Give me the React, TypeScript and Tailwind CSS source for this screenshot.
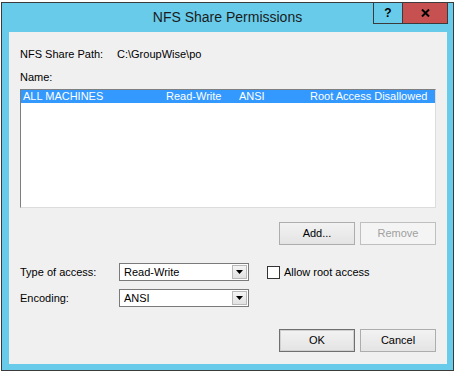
import React from "react";

const font = { fontFamily: '"Liberation Sans", Arial, sans-serif' };

function WinButton({ label, disabled, isDefault }: { label: string; disabled?: boolean; isDefault?: boolean }) {
  const base = "w-[76px] h-[23px] flex items-center justify-center text-[11px] leading-[13px]";
  if (disabled) {
    return <div className={`${base} border border-[#bfbfbf] bg-[#f4f4f4] text-[#a0a0a0]`}>{label}</div>;
  }
  return (
    <div
      className={`${base} border ${isDefault ? "border-[#6f6f6f] shadow-[inset_0_0_0_1px_#d0d0d0]" : "border-[#adadad]"} bg-gradient-to-b from-[#f2f2f2] to-[#e4e4e4] text-black`}
    >
      {label}
    </div>
  );
}

function Combo({ value }: { value: string }) {
  return (
    <div className="w-[130px] h-[18px] border border-[#7a7a7a] bg-white flex items-center">
      <span className="flex-1 pl-[4px] text-[11px] leading-[13px]">{value}</span>
      <div className="w-[15px] h-[14px] mr-[1px] border border-[#b9b9b9] bg-gradient-to-b from-[#f4f4f4] to-[#e2e2e2] flex items-center justify-center">
        <svg width="7" height="4" viewBox="0 0 7 4">
          <path d="M0 0h7L3.5 4z" fill="#000" />
        </svg>
      </div>
    </div>
  );
}

export default function App() {
  return (
    <div className="w-[456px] h-[372px] bg-white overflow-hidden pt-[2px] pl-[1px]" style={font}>
      <div className="w-[453px] h-[369px] border border-[#3b3b3b] bg-[#68cbea] flex flex-col">
        {/* title bar */}
        <div className="h-[29px] flex items-start shrink-0">
          <div className="w-[80px]" />
          <div className="flex-1 self-center text-center text-[14px] text-[#1b1b1b]">NFS Share Permissions</div>
          <div className="flex mr-[5px]">
            <div className="w-[29px] h-[21px] border-l border-b border-[#3b3b3b] flex items-center justify-center text-[12px] font-bold leading-none">?</div>
            <div className="w-[46px] h-[21px] border-l border-r border-b border-[#3b3b3b] bg-[#c75050] flex items-center justify-center">
              <svg width="9" height="8" viewBox="0 0 9 8">
                <path d="M1 0.5L8 7.5M8 0.5L1 7.5" stroke="#000" strokeWidth="2" />
              </svg>
            </div>
          </div>
        </div>

        {/* body */}
        <div className="ml-[7px] mr-[6px] h-[332px] bg-[#f0f0f0] px-[11px] pt-[16px] text-[11px] leading-[13px] text-black">
          <div className="flex h-[13px]">
            <span className="w-[97px]">NFS Share Path:</span>
            <span>C:\GroupWise\po</span>
          </div>
          <div className="mt-[10px] h-[13px]">Name:</div>

          <div className="mt-[5px] h-[119px] border border-t-[#7f7f7f] border-l-[#7f7f7f] border-r-[#dcdcdc] border-b-[#dcdcdc] bg-white">
            <div className="flex h-[13px] bg-[#3399ff] text-white">
              <span className="w-[143px] pl-[2px]">ALL MACHINES</span>
              <span className="w-[73px] pl-[2px]">Read-Write</span>
              <span className="w-[71px] pl-[2px]">ANSI</span>
              <span className="flex-1 pl-[2px]">Root Access Disallowed</span>
            </div>
          </div>

          <div className="mt-[14px] flex justify-end gap-[5px]">
            <WinButton label="Add..." />
            <WinButton label="Remove" disabled />
          </div>

          <div className="mt-[18px] flex items-center">
            <span className="w-[99px]">Type of access:</span>
            <Combo value="Read-Write" />
            <div className="ml-[18px] w-[13px] h-[13px] border border-[#333] bg-white" />
            <span className="ml-[4px]">Allow root access</span>
          </div>

          <div className="mt-[8px] flex items-center">
            <span className="w-[99px]">Encoding:</span>
            <Combo value="ANSI" />
          </div>

          <div className="mt-[22px] flex justify-end gap-[5px]">
            <WinButton label="OK" isDefault />
            <WinButton label="Cancel" />
          </div>
        </div>
      </div>
    </div>
  );
}
